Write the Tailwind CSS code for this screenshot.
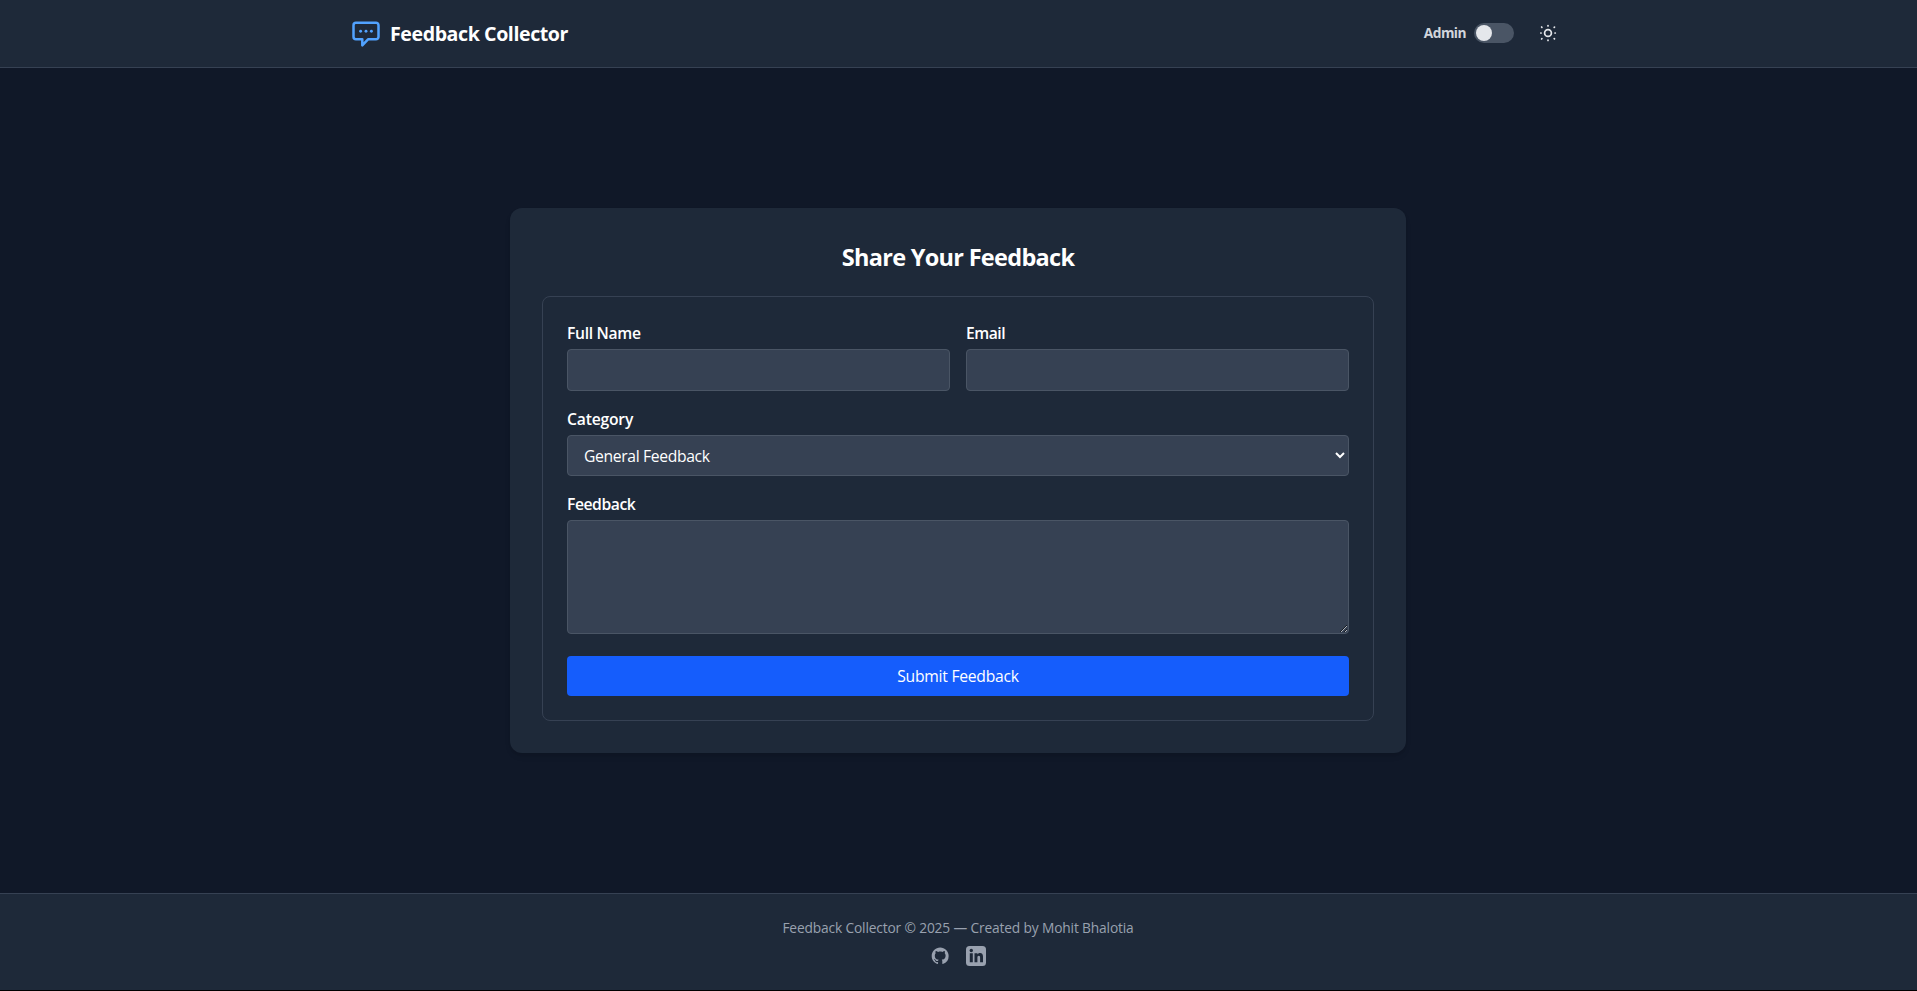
<!DOCTYPE html>
<html lang="en">
<head>
<meta charset="utf-8">
<title>Feedback Collector</title>
<script src="https://cdn.jsdelivr.net/npm/@tailwindcss/browser@4"></script>
</head>
<body class="h-[991px] overflow-hidden bg-black font-['Segoe_UI','Open_Sans','Noto_Sans',sans-serif] text-white">
<div class="flex h-[990px] flex-col bg-gray-900">
  <header class="h-[68px] shrink-0 border-b border-gray-700 bg-gray-800 pr-px">
    <div class="mx-auto flex h-full max-w-7xl items-center justify-between px-8">
      <div class="flex items-center">
        <svg class="mr-2 h-8 w-8" viewBox="0 0 32 32" fill="none" stroke="#51a2ff" stroke-width="2.500" stroke-linejoin="round"><path d="M6 4.700h20a2.500 2.500 0 0 1 2.500 2.500v11.600a2.500 2.500 0 0 1-2.500 2.500h-8l-5.700 6v-6H6a2.500 2.500 0 0 1-2.500-2.500V7.200A2.500 2.500 0 0 1 6 4.700z"/><g fill="#51a2ff" stroke="none"><circle cx="10.600" cy="13.200" r="1.450"/><circle cx="16" cy="13.200" r="1.450"/><circle cx="21.400" cy="13.200" r="1.450"/></g></svg>
        <span class="text-[19.6px] leading-7 font-bold tracking-[-0.42px]">Feedback Collector</span>
      </div>
      <div class="flex items-center pb-px">
        <span class="mr-2 text-[13.75px] leading-5 font-bold tracking-[-0.55px] text-gray-300">Admin</span>
        <span class="mr-4 flex h-5 w-10 items-center rounded-full bg-gray-600 px-0.5"><span class="h-4 w-4 rounded-full bg-gray-200"></span></span>
        <button class="p-2"><svg class="h-5 w-5" viewBox="0 0 20 20" fill="none" stroke="#e5e7eb" stroke-width="1.700" stroke-linecap="round"><circle cx="10" cy="10" r="3.400"/><path d="M10 2.600v.4M10 17v.4M2.800 10h.3M17 10h.3M3.600 4l.3.3M16.200 15.600l.3.300M3.600 16l.3-.3M16.200 4.400l.3-.3"/></svg></button>
      </div>
    </div>
  </header>
  <main class="flex flex-1 items-center justify-center pr-px">
    <section class="w-4xl rounded-xl bg-gray-800 p-8 shadow-md">
      <h1 class="mb-[23px] pt-px text-center text-[23.5px] leading-8 font-bold tracking-[-0.7px]">Share Your Feedback</h1>
      <form class="rounded-lg border border-gray-700 p-6 text-[15.7px] leading-6">
        <div class="mb-4 grid grid-cols-2 gap-4">
          <div><label class="mb-1 block font-semibold tracking-[-0.32px]">Full Name</label><input class="block h-[42px] w-full rounded border border-gray-600 bg-gray-700 px-4 py-2"></div>
          <div><label class="mb-1 block font-semibold tracking-[-0.5px]">Email</label><input class="block h-[42px] w-full rounded border border-gray-600 bg-gray-700 px-4 py-2"></div>
        </div>
        <label class="mb-1 block font-semibold tracking-[-0.2px]">Category</label>
        <select class="mb-4 block h-[41px] w-full rounded border border-gray-600 bg-gray-700 px-3 py-2 tracking-[-0.35px]"><option>General Feedback</option></select>
        <label class="mb-1 block font-semibold tracking-[-0.44px]">Feedback</label>
        <textarea class="mb-[22px] block h-[114px] w-full rounded border border-gray-600 bg-gray-700 px-4 py-2"></textarea>
        <button class="block h-10 w-full rounded bg-blue-600 tracking-[-0.26px]">Submit Feedback</button>
      </form>
    </section>
  </main>
  <footer class="flex h-[97px] shrink-0 flex-col items-center border-t border-gray-700 bg-gray-800 pt-6 pr-px text-gray-400">
    <p class="text-[13.75px] leading-5 tracking-[-0.15px]">Feedback Collector © 2025 — Created by Mohit Bhalotia</p>
    <div class="mt-2 flex items-center gap-4">
      <svg class="h-5 w-5" viewBox="0 0 20 20" fill="currentColor"><path transform="translate(1.700 1.500) scale(1.060)" d="M8 0C3.580 0 0 3.580 0 8c0 3.540 2.290 6.530 5.470 7.590.4.070.55-.17.55-.38 0-.19-.01-.82-.01-1.490-2.010.37-2.530-.49-2.690-.94-.09-.23-.48-.94-.82-1.130-.28-.15-.68-.52-.01-.53.63-.01 1.080.58 1.230.82.72 1.210 1.870.87 2.330.66.07-.52.28-.87.51-1.070-1.780-.2-3.640-.89-3.640-3.950 0-.87.31-1.590.82-2.150-.08-.2-.36-1.020.08-2.120 0 0 .67-.21 2.200.82.64-.18 1.320-.27 2-.27s1.360.09 2 .27c1.530-1.040 2.200-.82 2.200-.82.44 1.100.16 1.920.08 2.120.51.56.82 1.270.82 2.150 0 3.070-1.870 3.750-3.650 3.950.29.25.54.73.54 1.480 0 1.070-.01 1.930-.01 2.200 0 .21.15.46.55.38A8.010 8.010 0 0 0 16 8c0-4.420-3.580-8-8-8z"/></svg>
      <svg class="h-5 w-5" viewBox="0 0 20 20"><rect width="20" height="20" rx="3.500" fill="#99a1af"/><g fill="#1e2939"><circle cx="5.300" cy="4.500" r="1.700"/><path d="M3.800 7.300h3V16.300h-3zM8.500 7.300h2.900v1.200c.5-.8 1.400-1.400 2.600-1.400 2.200 0 3 1.500 3 3.700v5.500h-2.900v-4.600c0-1.100-.3-1.900-1.300-1.900s-1.400.8-1.400 1.800v4.700H8.500z"/></g></svg>
    </div>
  </footer>
</div>
</body>
</html>
